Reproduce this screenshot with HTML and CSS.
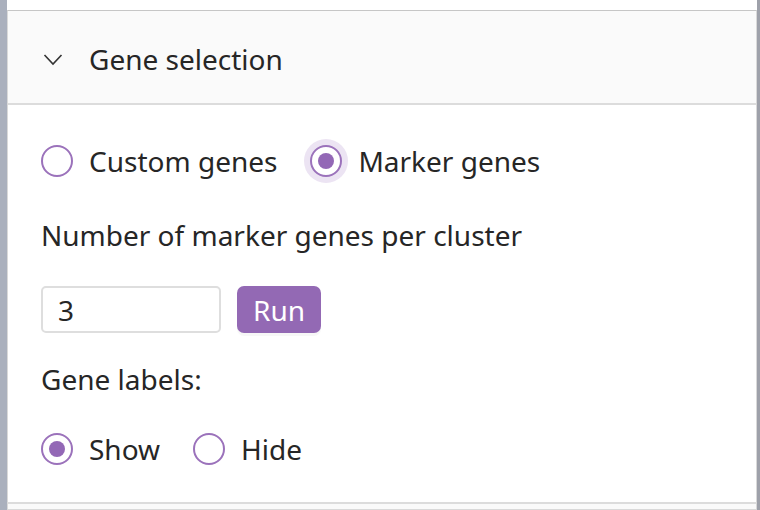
FILE: index.html
```html
<!DOCTYPE html>
<html lang="en">
<head>
    <meta charset="UTF-8">
    <meta name="viewport" content="width=device-width, initial-scale=1.0">
    <title>Gene selection</title>
    <link rel="stylesheet" href="styles.css">
</head>
<body>
    <div class="frame">
        <div class="panel">
            <!-- Collapse header -->
            <div class="panel-header">
                <svg class="chevron" width="20" height="13" viewBox="0 0 20 13">
                    <path d="M1.5 2 L10 11 L18.5 2" fill="none" stroke="#333" stroke-width="1.6"/>
                </svg>
                <span>Gene selection</span>
            </div>

            <div class="panel-body">
                <div class="radio-group">
                    <label class="radio">
                        <span class="dot"></span>
                        <span>Custom genes</span>
                    </label>
                    <label class="radio checked focused">
                        <span class="dot"></span>
                        <span>Marker genes</span>
                    </label>
                </div>

                <div class="field-label">Number of marker genes per cluster</div>

                <div class="controls">
                    <input class="num-input" type="text" value="3">
                    <button class="run-btn">Run</button>
                </div>

                <div class="field-label labels">Gene labels:</div>

                <div class="radio-group bottom">
                    <label class="radio checked">
                        <span class="dot"></span>
                        <span>Show</span>
                    </label>
                    <label class="radio">
                        <span class="dot"></span>
                        <span>Hide</span>
                    </label>
                </div>
            </div>
        </div>
        <div class="panel-next"></div>
    </div>
</body>
</html>
```

FILE: styles.css
```css
* { box-sizing: border-box; margin: 0; }
body { background: #fff; font-family: 'Noto Sans', sans-serif; color: #262626; height: 510px; overflow: hidden; }

.frame {
    height: 510px; padding-top: 10px;
    border-left: 7px solid #aab0bd; border-right: 3px solid #9ea1aa;
}
.panel { border: 1px solid #d9d9d9; border-top-color: #c6c6c6; border-bottom: none; }

.panel-header {
    display: flex; align-items: center; gap: 26px;
    height: 94px; padding-left: 35px;
    background: #fafafa; border-bottom: 2px solid #dcdcdc;
    font-size: 28px;
}
.panel-header span { margin-top: 3px; }
.chevron { margin-top: 5px; }

.panel-body { padding: 34px 0 0 33px; height: 397px; }

.radio-group { display: flex; align-items: center; gap: 33px; height: 44px; }
.radio-group.bottom { margin-top: 30px; }
.radio { display: flex; align-items: center; gap: 16px; font-size: 28px; }
.dot {
    position: relative; width: 32px; height: 32px; border-radius: 50%;
    border: 2px solid #9b72bb; background: #fff;
}
.radio.checked .dot::after {
    content: ''; position: absolute; left: 6px; top: 6px;
    width: 16px; height: 16px; border-radius: 50%; background: #9368b6;
}
.radio.focused .dot { box-shadow: 0 0 0 6px #ece4f3; }

.field-label { font-size: 28px; margin-top: 34px; line-height: 36px; }
.field-label.labels { margin-top: 28px; }

.controls { display: flex; gap: 16px; margin-top: 33px; }
.num-input {
    width: 180px; height: 47px; padding: 0 15px;
    border: 2px solid #dedede; border-radius: 5px;
    font: inherit; font-size: 28px; color: #262626; outline: none;
}
.run-btn {
    width: 84px; height: 47px; border: none; border-radius: 7px;
    background: #9369b4; color: #fff; font: inherit; font-size: 28px;
    box-shadow: 0 3px 0 rgba(0, 0, 0, 0.03);
}

.panel-next { height: 8px; background: #fafafa; border: 1px solid #d9d9d9; border-top: 2px solid #dcdcdc; }
```
